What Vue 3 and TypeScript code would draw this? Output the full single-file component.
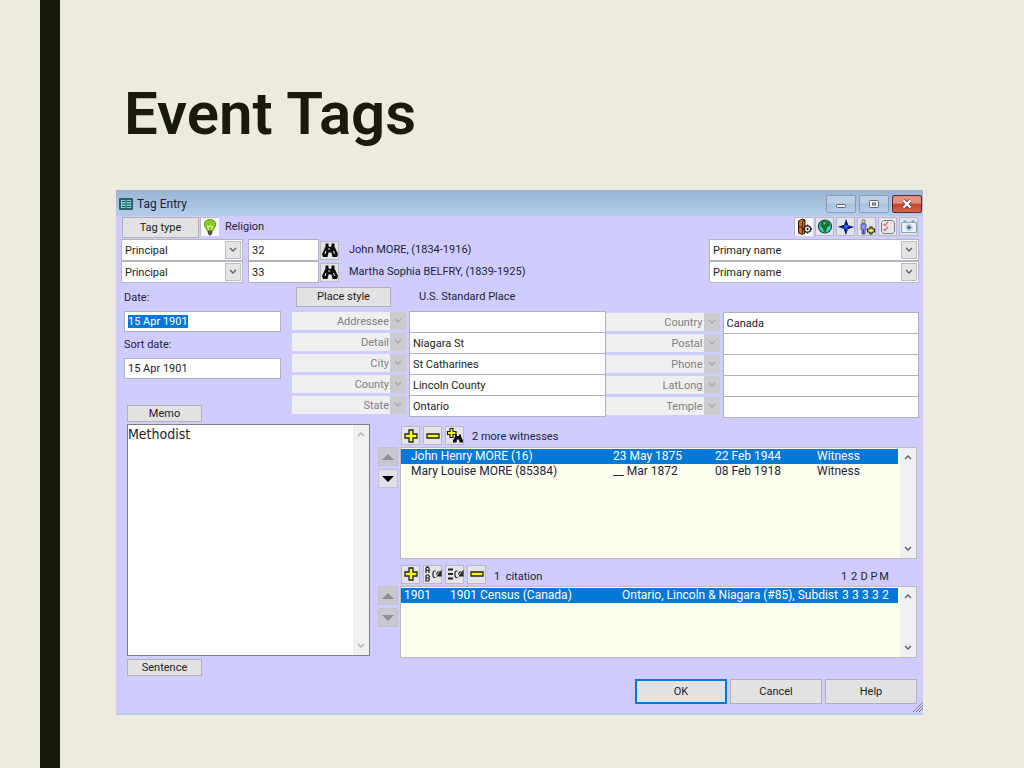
<script setup lang="ts">
import { ref } from 'vue'

interface Place {
  label: string
  value: string
}

interface Principal {
  id: string
  number: string
  name: string
}

const principals = ref<Principal[]>([
  { id: 'p1', number: '32', name: 'John MORE, (1834-1916)' },
  { id: 'p2', number: '33', name: 'Martha Sophia BELFRY, (1839-1925)' },
])

const placesLeft = ref<Place[]>([
  { label: 'Addressee', value: '' },
  { label: 'Detail', value: 'Niagara St' },
  { label: 'City', value: 'St Catharines' },
  { label: 'County', value: 'Lincoln County' },
  { label: 'State', value: 'Ontario' },
])

const placesRight = ref<Place[]>([
  { label: 'Country', value: 'Canada' },
  { label: 'Postal', value: '' },
  { label: 'Phone', value: '' },
  { label: 'LatLong', value: '' },
  { label: 'Temple', value: '' },
])

const witnesses = [
  { name: 'John Henry MORE (16)', born: '23 May 1875', died: '22 Feb 1944', role: 'Witness' },
  { name: 'Mary Louise MORE (85384)', born: '__ Mar 1872', died: '08 Feb 1918', role: 'Witness' },
]
const selectedWitness = ref(0)

const sureties = ['3', '3', '3', '3', '2']
const suretyHeads = ['1', '2', 'D', 'P', 'M']

const sortDate = ref('15 Apr 1901')
const memo = ref('Methodist')
</script>

<template>
  <div class="slide">
    <div class="stripe"></div>
    <main class="content">
      <h1>Event Tags</h1>

      <section class="dialog" aria-label="Tag Entry">
        <header class="titlebar">
          <svg class="form-icon" viewBox="0 0 14 12" width="14" height="12">
            <rect x="1" y="1" width="12" height="10" fill="#7fd6d3" stroke="#17484f" stroke-width="1.6" />
            <path d="M3 3.500h3M8 3.500h3.500M3 6h3M8 6h3.500M3 8.500h3M8 8.500h3.500M7 2v8" stroke="#17484f" stroke-width="1" />
          </svg>
          <span class="title">Tag Entry</span>
          <button class="win" type="button" aria-label="Minimize">
            <svg viewBox="0 0 12 10" width="12" height="10"><rect x="1.500" y="5.500" width="9" height="3" rx="1" fill="#eee" stroke="#5c6670" /></svg>
          </button>
          <button class="win" type="button" aria-label="Restore">
            <svg viewBox="0 0 12 10" width="12" height="10"><rect x="1.500" y="1.500" width="9" height="7" rx="1" fill="#f4f4f4" stroke="#5c6670" /><rect x="4.500" y="4" width="3" height="2" fill="#9fb9d6" stroke="#5c6670" /></svg>
          </button>
          <button class="win close" type="button" aria-label="Close">
            <svg viewBox="0 0 12 10" width="12" height="10"><path d="M2.500 1.500l7 7M9.500 1.500l-7 7" stroke="#6a3a3a" stroke-width="4" /><path d="M2.500 1.500l7 7M9.500 1.500l-7 7" stroke="#fff" stroke-width="2.400" /></svg>
          </button>
        </header>

        <div class="body">
          <div class="type-row">
            <button class="btn type-btn" type="button">Tag type</button>
            <button class="tool" type="button" aria-label="Reminder">
              <svg viewBox="0 0 18 18" width="18" height="18">
                <rect width="18" height="18" fill="#fdfdf8" />
                <path d="M9 1.500c-3.500 0-5.700 2.300-5.700 5 0 2.800 2.400 3.800 2.900 6.200h5.600c.5-2.400 2.900-3.400 2.900-6.200 0-2.700-2.200-5-5.700-5z" fill="#8ac926" stroke="#5f9612" />
                <path d="M7.500 12l-1-4 1.500 1 1-1.500 1 1.500 1.500-1-1 4" fill="none" stroke="#e3f7a0" />
                <path d="M6.500 13h5l-.5 3-1.500 1.500h-1L7 16z" fill="#4e5247" />
              </svg>
            </button>
            <span class="type-name">Religion</span>
            <div class="tools">
              <button class="tool" type="button" aria-label="Exhibits">
                <svg viewBox="0 0 18 18" width="18" height="18">
                  <rect width="18" height="18" fill="#f8f8f8" />
                  <path d="M3.500 3l4-2 2.500 1v13l-2.500 1.500-4-1.500z" fill="#c8701f" stroke="#2a1506" />
                  <path d="M7.500 3.500v12M7.500 3.500L10 2" stroke="#3b1d08" />
                  <path d="M4 8.500l3 1" stroke="#3b1d08" />
                  <circle cx="12.500" cy="11" r="3.200" fill="#e8e8e8" stroke="#222" stroke-width="1.300" />
                  <circle cx="12.500" cy="11" r="1" fill="#111" />
                  <path d="M12.500 6.500v1.500M12.500 14v1.500M8 11h1.500M15.500 11h1.500" stroke="#222" stroke-width="1.300" />
                </svg>
              </button>
              <button class="tool" type="button" aria-label="Map">
                <svg viewBox="0 0 18 18" width="18" height="18">
                  <circle cx="9" cy="8.500" r="6.500" fill="#3ed0c0" stroke="#174440" stroke-width="1.200" />
                  <path d="M5 4.500l4-2 4 2 1 3-3 2-1 4-2 .5-1-3.500-2.500-2z" fill="#14702c" />
                  <path d="M7 5l2-1 1 1.500-2 1.500z" fill="#53c96a" />
                </svg>
              </button>
              <button class="tool" type="button" aria-label="Compass">
                <svg viewBox="0 0 18 18" width="18" height="18">
                  <path d="M9 1l2 6 6 2-6 2-2 6-2-6-6-2 6-2z" fill="#0b2bd0" />
                  <path d="M9 1v8l2-2zM17 9H9l2 2zM9 17V9l-2 2zM1 9h8L7 7z" fill="#07104f" />
                  <path d="M7.500 7.500l3 3M10.500 7.500l-3 3" stroke="#2fa4ee" stroke-width="1.200" />
                </svg>
              </button>
              <button class="tool" type="button" aria-label="Add person">
                <svg viewBox="0 0 18 18" width="18" height="18">
                  <circle cx="5.500" cy="3.300" r="1.800" fill="#d9c27a" stroke="#555" stroke-width=".6" />
                  <path d="M3 5.800h5v5.700H7V16H4v-4.500H3z" fill="#8a94ee" stroke="#3b4390" stroke-width=".8" />
                  <path d="M5.500 11v5" stroke="#3b4390" />
                  <path d="M12 9h2v1.500l1 .5h1.500v3H15l-1 .5V16h-2v-1.500l-1-.5H9.500v-3H11l1-.5z" fill="#f4ee3a" stroke="#222" stroke-width="1.200" />
                </svg>
              </button>
              <button class="tool" type="button" aria-label="Checklist">
                <svg viewBox="0 0 18 18" width="18" height="18">
                  <path d="M4.500 2.500h9l2 2v9l-2 2h-9l-2-2v-9z" fill="#e6e6e6" stroke="#7c7c7c" />
                  <path d="M4.500 6l1.500 1.500L9 4M4.500 11l1.500 1.500L9 9" fill="none" stroke="#d46b76" stroke-width="1.200" />
                </svg>
              </button>
              <button class="tool" type="button" aria-label="Camera">
                <svg viewBox="0 0 18 18" width="18" height="18">
                  <rect x="1.500" y="4.500" width="15" height="10" rx="1" fill="#eaf2f8" stroke="#7fa8c4" stroke-width="1.200" />
                  <path d="M3.500 3h3M11.500 3h3" stroke="#6d9cc0" stroke-width="1.500" />
                  <circle cx="9" cy="9.500" r="3" fill="#d6e4ee" stroke="#9aaab8" stroke-dasharray="1.500 1" />
                  <path d="M9 7.500v4M7 9.500h4" stroke="#3d5f86" stroke-width="1.500" />
                </svg>
              </button>
            </div>
          </div>

          <div v-for="p in principals" :key="p.id" class="principal">
            <div class="combo role">
              <select aria-label="Role"><option>Principal</option></select>
              <span class="drop"><svg viewBox="0 0 8 6" width="8" height="6"><path d="M1 1l3 3 3-3" /></svg></span>
            </div>
            <input v-model="p.number" class="field number" type="text" aria-label="Person number">
            <button class="tool find" type="button" aria-label="Find person">
              <svg viewBox="0 0 18 16" width="18" height="16">
                <path d="M4.500 1.500h3v2.500l1 1h1l1-1V1.500h3v3l3.500 7.500-1 3h-4.500L10.500 10.500h-3l-1 4.500H2L1 12l3.500-7.500z" fill="#0c0c0c" />
                <path d="M5 9l-1 3M8 6v2M12.500 9l1 3" stroke="#e6e6e6" />
              </svg>
            </button>
            <span class="person">{{ p.name }}</span>
            <div class="combo name-style">
              <select aria-label="Name"><option>Primary name</option></select>
              <span class="drop"><svg viewBox="0 0 8 6" width="8" height="6"><path d="M1 1l3 3 3-3" /></svg></span>
            </div>
          </div>

          <div class="form">
            <div class="dates">
              <label for="date">Date:</label>
              <div id="date" class="field date-box" role="textbox" aria-label="Date" tabindex="0" contenteditable="true"><span class="marked">15 Apr 1901</span></div>
              <label for="sort-date">Sort date:</label>
              <input id="sort-date" v-model="sortDate" class="field date-box" type="text">
            </div>

            <div class="places">
              <div class="place-head">
                <button class="btn place-btn" type="button">Place style</button>
                <span>U.S. Standard Place</span>
              </div>
              <div class="place-cols">
                <div v-for="(col, c) in [placesLeft, placesRight]" :key="c" class="place-col" :class="{ second: c === 1 }">
                  <div v-for="pl in col" :key="pl.label" class="place">
                    <div class="combo kind">
                      <select disabled :aria-label="pl.label + ' field'"><option>{{ pl.label }}</option></select>
                      <span class="drop"><svg viewBox="0 0 8 6" width="8" height="6"><path d="M1 1l3 3 3-3" /></svg></span>
                    </div>
                    <input v-model="pl.value" class="field" type="text" :aria-label="pl.label">
                  </div>
                </div>
              </div>
            </div>

            <button class="btn small memo-btn" type="button">Memo</button>

            <div class="memo">
              <div class="memo-box">
                <textarea v-model="memo" aria-label="Memo"></textarea>
                <div class="scroll faint">
                  <svg viewBox="0 0 8 6" width="8" height="6"><path d="M1 5l3-3 3 3" /></svg>
                  <svg viewBox="0 0 8 6" width="8" height="6"><path d="M1 1l3 3 3-3" /></svg>
                </div>
              </div>
              <button class="btn small" type="button">Sentence</button>
            </div>

            <div class="lists">
              <div class="list-tools">
                <button class="tool" type="button" aria-label="Add witness">
                  <svg viewBox="0 0 18 18" width="18" height="18"><path d="M7 3h4v4h4v4h-4v4H7v-4H3V7h4z" fill="#fbf51a" stroke="#222" stroke-width="1.300" /></svg>
                </button>
                <button class="tool" type="button" aria-label="Remove witness">
                  <svg viewBox="0 0 18 18" width="18" height="18"><path d="M3 7h12v4H3z" fill="#fbf51a" stroke="#222" stroke-width="1.300" /></svg>
                </button>
                <button class="tool" type="button" aria-label="Find witness">
                  <svg viewBox="0 0 18 18" width="18" height="18">
                    <path d="M4 1.500h3v3h3v3H7v3H4v-3H1.500v-3H4z" fill="#fbf51a" stroke="#222" stroke-width="1.200" />
                    <path d="M9 7.500h2v1.500h2V7.500h2v2l2 4v2h-3.500l-.5-3h-2l-.5 3H7v-2l2-4z" fill="#0c0c0c" />
                  </svg>
                </button>
                <span>2 more witnesses</span>
              </div>
              <div class="list-row">
                <div class="movers">
                  <button class="mover off" type="button" disabled aria-label="Move witness up"><svg viewBox="0 0 14 8" width="14" height="8"><path d="M1 7l6-6 6 6z" /></svg></button>
                  <button class="mover" type="button" aria-label="Move witness down"><svg viewBox="0 0 14 8" width="14" height="8"><path d="M1 1l6 6 6-6z" /></svg></button>
                </div>
                <div class="list tall">
                  <table class="witnesses">
                    <colgroup><col class="w-name"><col class="w-date"><col class="w-date"><col></colgroup>
                    <tbody>
                      <tr v-for="(w, i) in witnesses" :key="w.name" :class="{ picked: i === selectedWitness }" @click="selectedWitness = i">
                        <td>{{ w.name }}</td>
                        <td>{{ w.born }}</td>
                        <td>{{ w.died }}</td>
                        <td>{{ w.role }}</td>
                      </tr>
                    </tbody>
                  </table>
                  <div class="scroll">
                    <svg viewBox="0 0 8 6" width="8" height="6"><path d="M1 5l3-3 3 3" /></svg>
                    <svg viewBox="0 0 8 6" width="8" height="6"><path d="M1 1l3 3 3-3" /></svg>
                  </div>
                </div>
              </div>

              <div class="list-tools cite-tools">
                <button class="tool" type="button" aria-label="Add citation">
                  <svg viewBox="0 0 18 18" width="18" height="18"><path d="M7 3h4v4h4v4h-4v4H7v-4H3V7h4z" fill="#fbf51a" stroke="#222" stroke-width="1.300" /></svg>
                </button>
                <button class="tool" type="button" aria-label="Repeat citation">
                  <svg viewBox="0 0 18 18" width="18" height="18" fill="none" stroke="#222" stroke-width="1.200">
                    <path d="M2 8V3l1.500-1.500L5 3v5M2 5.500h3M2 10v6h2.500l1-1.500-1-1.500H2M4.500 13l1-1.500-1-1.500H2" />
                    <path d="M11.500 6H10L9 7.500V11l1 1.500h1.500M12.500 9.500l1-2.500H16" /><path d="M17 6.500v4.500h-3.500z" fill="#222" />
                  </svg>
                </button>
                <button class="tool" type="button" aria-label="Repeat citation list">
                  <svg viewBox="0 0 18 18" width="18" height="18" fill="none" stroke="#222" stroke-width="1.200">
                    <path d="M2 4.500h5M2 9h5M2 13.500h5" stroke-width="2" />
                    <path d="M11.500 6H10L9 7.500V11l1 1.500h1.500M12.500 9.500l1-2.500H16" /><path d="M17 6.500v4.500h-3.500z" fill="#222" />
                  </svg>
                </button>
                <button class="tool" type="button" aria-label="Remove citation">
                  <svg viewBox="0 0 18 18" width="18" height="18"><path d="M3 7h12v4H3z" fill="#fbf51a" stroke="#222" stroke-width="1.300" /></svg>
                </button>
                <span class="cite-count">1&nbsp; citation</span>
                <div class="heads"><span v-for="h in suretyHeads" :key="h">{{ h }}</span></div>
              </div>
              <div class="list-row">
                <div class="movers">
                  <button class="mover off" type="button" disabled aria-label="Move citation up"><svg viewBox="0 0 14 8" width="14" height="8"><path d="M1 7l6-6 6 6z" /></svg></button>
                  <button class="mover off" type="button" disabled aria-label="Move citation down"><svg viewBox="0 0 14 8" width="14" height="8"><path d="M1 1l6 6 6-6z" /></svg></button>
                </div>
                <div class="list short">
                  <table class="citations">
                    <colgroup><col class="c-num"><col class="c-title"><col><col v-for="(s, i) in sureties" :key="i" class="c-sure"><col class="c-end"></colgroup>
                    <tbody>
                      <tr class="picked">
                        <td>1901</td>
                        <td>1901 Census (Canada)</td>
                        <td>Ontario, Lincoln &amp; Niagara (#85), Subdist</td>
                        <td v-for="(s, i) in sureties" :key="i">{{ s }}</td>
                        <td></td>
                      </tr>
                    </tbody>
                  </table>
                  <div class="scroll">
                    <svg viewBox="0 0 8 6" width="8" height="6"><path d="M1 5l3-3 3 3" /></svg>
                    <svg viewBox="0 0 8 6" width="8" height="6"><path d="M1 1l3 3 3-3" /></svg>
                  </div>
                </div>
              </div>
            </div>
          </div>

          <footer class="actions">
            <button class="btn action primary" type="button">OK</button>
            <button class="btn action" type="button">Cancel</button>
            <button class="btn action" type="button">Help</button>
          </footer>
          <svg class="grip" viewBox="0 0 10 10" width="10" height="10"><path d="M0 10L10 0M3 10l7-7M6 10l4-4" stroke="#80808c" /></svg>
        </div>
      </section>
    </main>
  </div>
</template>

<style>
body {
  margin: 0;
  background: #edeae0;
}
</style>

<style scoped>
* {
  box-sizing: border-box;
}

.slide {
  display: flex;
  min-height: 100vh;
  background: #edeae0;
  font-family: Roboto, "Noto Sans", sans-serif;
  font-size: 11px;
  line-height: 14px;
  color: #22223a;
}

.stripe {
  flex: none;
  width: 20px;
  margin-left: 40px;
  background: #19190d;
}

.content {
  flex: 1;
  min-width: 0;
  padding: 74px 101px 0 56px;
}

h1 {
  margin: 0 0 36px 8px;
  font: 600 60px/80px Roboto, "Open Sans", sans-serif;
  color: #19190d;
}

button,
input,
select,
textarea {
  margin: 0;
  font-family: inherit;
  font-size: inherit;
  line-height: inherit;
  color: #222;
}

button {
  padding: 0;
}

.dialog {
  background: #cfcdff;
  border-bottom: 2px solid #b8cbe6;
}

.titlebar {
  display: flex;
  align-items: center;
  gap: 3px;
  height: 26px;
  padding: 1px 1px 0 3px;
  background: linear-gradient(#9ab4d3, #b4cdea);
}

.title {
  flex: 1;
  margin-left: 1px;
  font-size: 12px;
}

.win {
  display: flex;
  align-items: center;
  justify-content: center;
  width: 30px;
  height: 18px;
  background: linear-gradient(#bdd0e6 45%, #a9c1dc 50%, #b9cfe8);
  border: 1px solid #879cb5;
  border-radius: 2px;
}

.win.close {
  background: linear-gradient(#e0917f 45%, #c2412c 50%, #d4644c);
  border-color: #5d2a2a;
}

.body {
  position: relative;
  padding: 1px 4px 9px 5px;
}

.type-row {
  display: flex;
  align-items: flex-start;
  height: 22px;
}

.btn {
  height: 20px;
  text-align: center;
  background: #e2e2e2;
  border: 1px solid #b0b2ba;
}

.type-btn {
  width: 77px;
  height: 21px;
  margin: 0 1px;
}

.type-name {
  margin: 3px 0 0 6px;
}

.tool {
  display: flex;
  align-items: center;
  justify-content: center;
  width: 19px;
  height: 19px;
  background: #e4e4e6;
  border: 1px solid #b9b9c6;
}

.tool svg {
  flex: none;
}

.tools {
  display: flex;
  gap: 2px;
  margin: 0 1px 0 auto;
}

.principal {
  display: flex;
  align-items: center;
  height: 22px;
}

.combo {
  display: flex;
  height: 22px;
  background: #fff;
  border: 1px solid #b5b5c2;
}

.combo select {
  flex: 1;
  min-width: 0;
  padding: 1px 0 0 3px;
  background: transparent;
  border: 0;
  appearance: none;
}

.drop {
  display: flex;
  align-items: center;
  justify-content: center;
  width: 16px;
  margin: 1px;
  background: #e4e4e4;
  border: 1px solid #bdbdbd;
}

.drop svg,
.scroll svg {
  fill: none;
  stroke: #666;
  stroke-width: 1.5;
}

.role {
  width: 122px;
}

.field {
  display: block;
  height: 22px;
  padding: 0 3px;
  background: #fff;
  border: 1px solid #b0b0bd;
  color: #222;
}

.number {
  width: 71px;
  margin: 0 1px 0 5px;
}

.person {
  flex: 1;
  margin-left: 10px;
}

.name-style {
  width: 210px;
}

.form {
  display: grid;
  grid-template-columns: 171px 86px 1fr;
  grid-template-rows: 122px 19px auto;
}

.dates {
  grid-area: 1 / 1;
  padding: 8px 0 0 3px;
}

.dates label {
  display: block;
}

.date-box {
  width: 157px;
  height: 21px;
  margin: 6px 0;
  line-height: 19px;
}

.marked {
  color: #fff;
  background: #0078d7;
}

.places {
  grid-area: 1 / 2 / 3 / 4;
  padding-top: 4px;
}

.place-head {
  display: flex;
  align-items: center;
  gap: 28px;
  padding-left: 4px;
  margin-bottom: 4px;
}

.place-btn {
  width: 95px;
}

.place-cols {
  display: grid;
  grid-template-columns: 1fr 1fr;
}

.place {
  display: flex;
  height: 21px;
}

.place .field {
  flex: 1;
  min-width: 0;
}

.kind {
  width: 114px;
  height: 18px;
  margin-top: 1px;
  margin-right: 3px;
  background: #efefef;
  border: 0;
}

.kind select {
  color: #808080;
  text-align: right;
  text-align-last: right;
  opacity: 1;
}

.kind .drop {
  margin: 0 0 0 1px;
  background: #cbcbcf;
  border: 0;
}

.kind .drop svg {
  stroke: #aaa;
}

.second {
  padding-top: 1px;
}

.small {
  width: 75px;
  height: 17px;
  line-height: 14px;
}

.memo-btn {
  grid-area: 2 / 1;
  margin-left: 6px;
}

.memo {
  grid-area: 3 / 1 / 4 / 3;
  margin: 0 8px 0 6px;
}

.memo-box {
  display: flex;
  height: 232px;
  margin-bottom: 3px;
  background: #fff;
  border: 1px solid #7d7d8a;
}

textarea {
  flex: 1;
  min-width: 0;
  padding: 1px 0;
  font-family: "DejaVu Sans Condensed", "Noto Sans", sans-serif;
  font-size: 14px;
  line-height: 16px;
  border: 0;
  resize: none;
  background: transparent;
}

.scroll {
  display: flex;
  flex: none;
  flex-direction: column;
  align-items: center;
  justify-content: space-between;
  width: 16px;
  padding: 6px 0;
  background: #f0f0f0;
}

.faint svg {
  stroke: #b0b0b0;
}

.lists {
  grid-area: 3 / 3;
  padding-top: 2px;
}

.list-tools {
  display: flex;
  align-items: center;
  gap: 3px;
  padding-left: 23px;
  margin-bottom: 2px;
}

.list-tools > span {
  padding-top: 2px;
  margin-left: 5px;
}

.cite-tools {
  margin-top: 5px;
}

.list-tools > .cite-count {
  padding-top: 6px;
}

.heads {
  display: flex;
  margin: 6px 30px 0 auto;
}

.heads span {
  width: 10px;
  text-align: center;
}

.list-row {
  display: flex;
  gap: 2px;
}

.movers {
  display: grid;
  gap: 3px;
  align-content: start;
}

.mover {
  display: flex;
  align-items: center;
  justify-content: center;
  width: 20px;
  height: 19px;
  background: #e0e0e4;
  border: 1px solid #c2c2ce;
}

.mover.off {
  background: #c9c9cd;
}

.mover.off svg {
  fill: #8f8f8f;
}

.list {
  display: flex;
  flex: 1;
  align-items: flex-start;
  min-width: 0;
  margin-right: 2px;
  background: #fffff0;
  border: 1px solid #b9b9c2;
}

.list .scroll {
  align-self: stretch;
  margin-left: 2px;
}

.tall {
  height: 112px;
}

.short {
  height: 72px;
}

table {
  flex: 1;
  width: 100%;
  margin-top: 1px;
  border-collapse: collapse;
  table-layout: fixed;
  font-size: 12px;
  line-height: 15px;
}

td {
  padding: 0;
  overflow: hidden;
  white-space: nowrap;
}

.picked {
  color: #fff;
  background: #0078d7;
}

.witnesses td:first-child {
  padding-left: 10px;
}

.w-name {
  width: 212px;
}

.w-date {
  width: 102px;
}

.citations td:first-child {
  padding-left: 3px;
}

.c-num {
  width: 49px;
}

.c-title {
  width: 172px;
}

.c-sure {
  width: 10px;
}

.c-end {
  width: 6px;
}

.actions {
  display: flex;
  justify-content: flex-end;
  gap: 3px;
  margin: 3px 2px 0 0;
}

.action {
  width: 92px;
  height: 25px;
}

.primary {
  border: 2px solid #0078d7;
}

.grip {
  position: absolute;
  right: 0;
  bottom: 1px;
}
</style>
